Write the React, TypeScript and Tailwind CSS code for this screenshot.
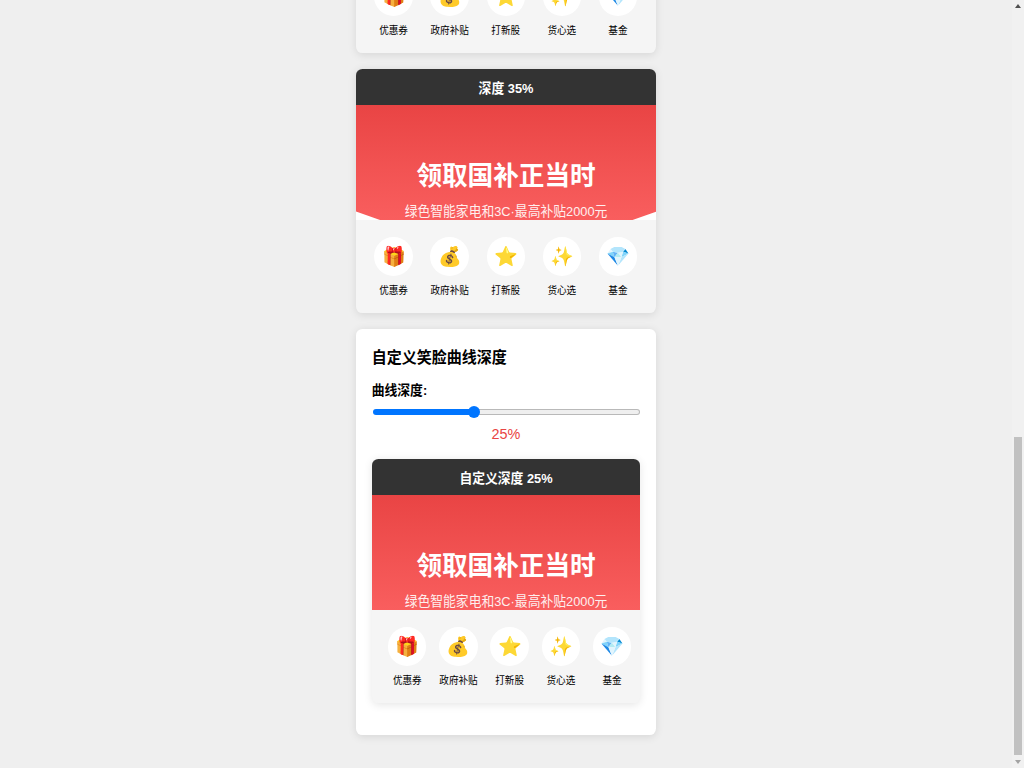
import React, { useState } from 'react';

const items = [
  { icon: '🎁', label: '优惠券' },
  { icon: '💰', label: '政府补贴' },
  { icon: '⭐', label: '打新股' },
  { icon: '✨', label: '货心选' },
  { icon: '💎', label: '基金' },
];

type CardProps = { title: string; narrow?: boolean; curve?: boolean };

function BannerCard({ title, narrow, curve }: CardProps) {
  return (
    <div className="h-[243.2px] shrink-0 overflow-hidden rounded-[6.4px] bg-[#f5f5f5] shadow-[0_1.6px_8px_rgba(0,0,0,0.1)]">
      <div className="flex h-[36px] items-center justify-center bg-[#333] pt-[3.2px] text-[12.8px] font-bold leading-[18px] text-white">
        <span className="inline-block scale-y-[1.07]">{title}</span>
      </div>
      <div className="relative flex h-[114.4px] flex-col items-center overflow-hidden whitespace-nowrap bg-linear-to-b from-[#e94444] to-[#f95e5e] pt-[51px] text-white">
        {curve && (
          <svg className="absolute bottom-0 left-0 h-[9px] w-full" viewBox="0 0 300 9" preserveAspectRatio="none" fill="#fff">
            <path d="M0 0.5 L24 9 H0 Z M300 0.5 L276 9 H300 Z" />
          </svg>
        )}
        <div className="origin-top scale-y-[1.04] text-[25.6px] font-bold leading-[38px]">领取国补正当时</div>
        <div className="mt-[7.4px] scale-y-[1.06] text-[12.8px] leading-[19px] opacity-90">绿色智能家电和3C·最高补贴2000元</div>
      </div>
      <div className={narrow ? 'grid grid-cols-[repeat(5,51.2px)] pl-[10px] pt-[16.9px]' : 'grid grid-cols-[repeat(5,56.1px)] pl-[9.8px] pt-[16.9px]'}>
        {items.map((item) => (
          <div key={item.label} className="flex flex-col items-center">
            <div className="flex h-[39px] w-[38.4px] items-center justify-center rounded-full bg-white pt-[1px] text-[19.2px] leading-[22px]">
              <span className="inline-block translate-x-[0.3px]">{item.icon}</span>
            </div>
            <div className="mt-[8px] scale-y-[1.08] whitespace-nowrap text-[9.6px] leading-[14px] text-black">{item.label}</div>
          </div>
        ))}
      </div>
    </div>
  );
}

export default function App() {
  const [depth] = useState(25);
  return (
    <div className="flex h-[768px] w-[1024px] overflow-hidden bg-[#efefef] font-['Liberation_Sans','Noto_Sans_CJK_SC','Noto_Color_Emoji',sans-serif] text-black">
      <div className="flex flex-1 justify-center overflow-hidden">
        <div className="-mt-[190px] flex w-[300.6px] shrink-0 flex-col gap-[16.2px]">
          <BannerCard title="深度 30%" curve />
          <BannerCard title="深度 35%" curve />
          <div className="h-[406.6px] shrink-0 rounded-[6.4px] bg-white px-[16px] pt-[17px] shadow-[0_1.6px_8px_rgba(0,0,0,0.1)]">
            <h3 className="h-[24px] scale-y-[1.05] text-[15px] font-bold leading-[24px]">自定义笑脸曲线深度</h3>
            <div className="mt-[11px] h-[20px] scale-y-[1.07] text-[12.8px] font-bold leading-[20px]">曲线深度:</div>
            <div className="mt-[4.6px] flex h-[13px] items-center">
              <div className="ml-[1px] h-[6.6px] w-[96px] rounded-l-full bg-[#0075ff]" />
              <div className="z-10 -mx-[1px] size-[12.6px] shrink-0 rounded-full bg-[#0075ff]" />
              <div className="mr-[0.6px] h-[6.6px] flex-1 rounded-r-full border border-l-0 border-[#b9b9b9] bg-[#efefef]" />
            </div>
            <div className="mt-[6.4px] h-[18px] scale-y-[1.07] text-center text-[14.4px] leading-[18px] text-[#e94444]">{depth}%</div>
            <div className="mt-[16.6px]">
              <BannerCard title={`自定义深度 ${depth}%`} narrow />
            </div>
          </div>
        </div>
      </div>
      <div className="flex w-[12px] shrink-0 flex-col items-center justify-between bg-[#f1f1f1] py-[4px]">
        <svg className="h-[4px] w-[6px]" viewBox="0 0 6 4" fill="#505050"><path d="M3 0 L6 4 H0 Z" /></svg>
        <div className="mb-[5px] mt-auto h-[318px] w-[8px] bg-[#c1c1c1]" />
        <svg className="h-[4px] w-[6px]" viewBox="0 0 6 4" fill="#a3a3a3"><path d="M0 0 H6 L3 4 Z" /></svg>
      </div>
    </div>
  );
}
